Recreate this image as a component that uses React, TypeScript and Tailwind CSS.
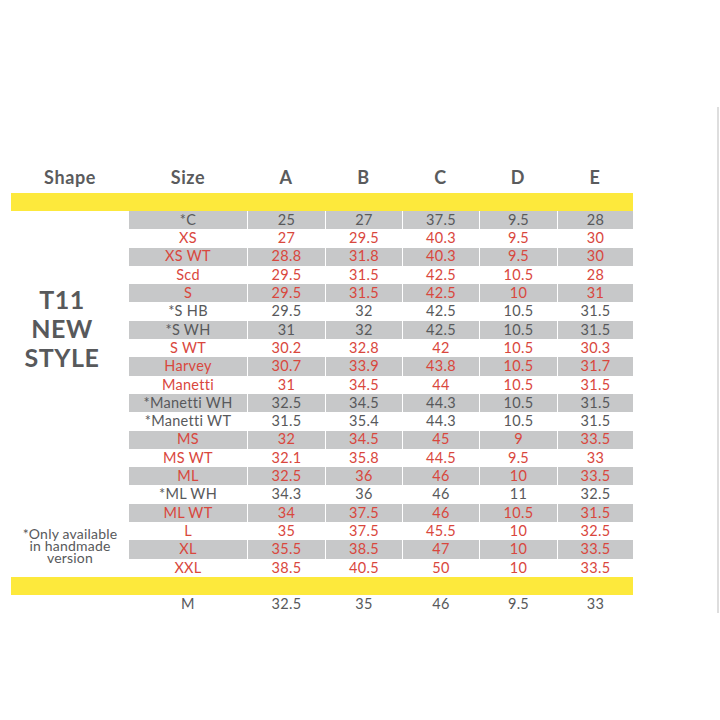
const RED = 'text-[#d9473d]';
const GRAY = 'text-[#58595b]';

type Row = { size: string; vals: string[]; red: boolean };

const rows: Row[] = [
  { size: '*C', vals: ['25', '27', '37.5', '9.5', '28'], red: false },
  { size: 'XS', vals: ['27', '29.5', '40.3', '9.5', '30'], red: true },
  { size: 'XS WT', vals: ['28.8', '31.8', '40.3', '9.5', '30'], red: true },
  { size: 'Scd', vals: ['29.5', '31.5', '42.5', '10.5', '28'], red: true },
  { size: 'S', vals: ['29.5', '31.5', '42.5', '10', '31'], red: true },
  { size: '*S HB', vals: ['29.5', '32', '42.5', '10.5', '31.5'], red: false },
  { size: '*S WH', vals: ['31', '32', '42.5', '10.5', '31.5'], red: false },
  { size: 'S WT', vals: ['30.2', '32.8', '42', '10.5', '30.3'], red: true },
  { size: 'Harvey', vals: ['30.7', '33.9', '43.8', '10.5', '31.7'], red: true },
  { size: 'Manetti', vals: ['31', '34.5', '44', '10.5', '31.5'], red: true },
  { size: '*Manetti WH', vals: ['32.5', '34.5', '44.3', '10.5', '31.5'], red: false },
  { size: '*Manetti WT', vals: ['31.5', '35.4', '44.3', '10.5', '31.5'], red: false },
  { size: 'MS', vals: ['32', '34.5', '45', '9', '33.5'], red: true },
  { size: 'MS WT', vals: ['32.1', '35.8', '44.5', '9.5', '33'], red: true },
  { size: 'ML', vals: ['32.5', '36', '46', '10', '33.5'], red: true },
  { size: '*ML WH', vals: ['34.3', '36', '46', '11', '32.5'], red: false },
  { size: 'ML WT', vals: ['34', '37.5', '46', '10.5', '31.5'], red: true },
  { size: 'L', vals: ['35', '37.5', '45.5', '10', '32.5'], red: true },
  { size: 'XL', vals: ['35.5', '38.5', '47', '10', '33.5'], red: true },
  { size: 'XXL', vals: ['38.5', '40.5', '50', '10', '33.5'], red: true },
];

const COLS = 'grid grid-cols-[118px_78px_77px_77px_78px_76px]';

function TableRow({ row, shaded }: { row: Row; shaded: boolean }) {
  return (
    <div className={`${COLS} h-[18.3px] ${shaded ? 'bg-[#c7c8c9]' : 'bg-white'} ${row.red ? RED : GRAY}`}>
      {[row.size, ...row.vals].map((v, i) => (
        <div
          key={i}
          className={`flex items-center justify-center text-[14.5px] tracking-[0.3px] leading-none ${i > 0 ? 'border-l-[1.5px] border-white' : ''}`}
        >
          {v}
        </div>
      ))}
    </div>
  );
}

export default function App() {
  return (
    <div className="w-[720px] h-[720px] bg-white flex font-['Lato','DejaVu_Sans',sans-serif]">
      <div className="w-[717px] pt-[167px] pl-[11px]">
        {/* header */}
        <div className="flex h-[26px] pb-[5px] items-center font-bold text-[18px] tracking-[0.6px] text-[#5a5b5d]">
          <div className="w-[118px] text-center">Shape</div>
          <div className={`${COLS} flex-1 max-w-[504px]`}>
            {['Size', 'A', 'B', 'C', 'D', 'E'].map((h) => (
              <div key={h} className="text-center">{h}</div>
            ))}
          </div>
        </div>
        <div className="w-[622px] h-[18px] bg-[#fde93c]" />

        {/* body */}
        <div className="flex">
          <div className="w-[118px] flex flex-col items-center">
            <div className="mt-[74px] pr-[16px] text-center font-bold text-[25px] tracking-[0.5px] leading-[29px] text-[#58595b]">
              <div>T11</div>
              <div>NEW</div>
              <div>STYLE</div>
            </div>
            <div className="mt-[156px] text-center text-[14px] tracking-[0.2px] leading-[12px] text-[#58595b]">
              <div>*Only available</div>
              <div>in handmade</div>
              <div>version</div>
            </div>
          </div>
          <div className="w-[504px]">
            {rows.map((r, i) => (
              <TableRow key={r.size} row={r} shaded={i % 2 === 0} />
            ))}
          </div>
        </div>

        <div className="w-[622px] h-[18px] bg-[#fde93c]" />
        <div className="flex">
          <div className="w-[118px]" />
          <div className="w-[504px]">
            <TableRow row={{ size: 'M', vals: ['32.5', '35', '46', '9.5', '33'], red: false }} shaded={false} />
          </div>
        </div>
      </div>
      <div className="mt-[107px] w-[2px] h-[506px] bg-[#dedede]" />
    </div>
  );
}
